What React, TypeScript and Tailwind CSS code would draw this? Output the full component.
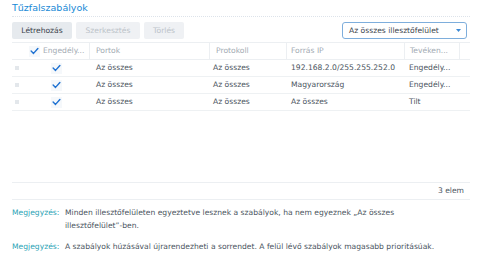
import React from 'react';

type Row = {
  ports: string;
  protocol: string;
  source: string;
  action: string;
};

const rows: Row[] = [
  { ports: 'Az összes', protocol: 'Az összes', source: '192.168.2.0/255.255.252.0', action: 'Engedély...' },
  { ports: 'Az összes', protocol: 'Az összes', source: 'Magyarország', action: 'Engedély...' },
  { ports: 'Az összes', protocol: 'Az összes', source: 'Az összes', action: 'Tilt' },
];

const cols = 'grid grid-cols-[13px_65px_120px_77px_118px_55px_10px]';

const Check = () => (
  <svg width="9" height="8" viewBox="0 0 10 9" fill="none">
    <path d="M1.2 4.6 L3.9 7.2 L8.8 1.6" stroke="#1f72d2" strokeWidth="1.6" strokeLinecap="round" strokeLinejoin="round" />
  </svg>
);

const App = () => {
  return (
    <div className="w-[480px] h-[260px] bg-white overflow-hidden font-['DejaVu_Sans',sans-serif] text-[7.6px] text-[#4a545e]">
      <div className="pl-3 pr-[10px]">
        {/* title */}
        <div className="h-[17px] flex items-center border-b border-dotted border-[#dde3ea] text-[9.5px] text-[#1789d6]">
          Tűzfalszabályok
        </div>

        {/* toolbar */}
        <div className="mt-[5px] h-[17px] flex items-center">
          <button className="h-[17px] w-[60px] rounded-[2px] bg-[#e6eaee] text-[#3b434b]">Létrehozás</button>
          <button className="ml-1 h-[17px] w-[64px] rounded-[2px] bg-[#eff1f4] text-[#bcc3c9]">Szerkesztés</button>
          <button className="ml-1 h-[17px] w-[40px] rounded-[2px] bg-[#eff1f4] text-[#bcc3c9]">Törlés</button>
          <div className="ml-auto mr-[3px] h-[17px] w-[125px] rounded-[3px] border border-[#7eaedc] flex items-center pl-[6px] pr-[5px] text-[#3b434b]">
            <span>Az összes illesztőfelület</span>
            <svg className="ml-auto" width="5" height="3" viewBox="0 0 5 3">
              <path d="M0 0 H5 L2.5 3 Z" fill="#3d8ad6" />
            </svg>
          </div>
        </div>

        {/* table */}
        <div className="mt-[3px] border-t border-[#eceff2]">
          <div className={`${cols} h-[17px] border-b border-[#eceff2] text-[#a3abb3]`}>
            <div />
            <div className="flex items-center pl-[4px] border-r border-[#eceff2]">
              <span className="w-[11px] h-[11px] flex items-center justify-center bg-[#f5f8fb]">
                <Check />
              </span>
              <span className="ml-[3px]">Engedély...</span>
            </div>
            <div className="flex items-center pl-[6px] border-r border-[#eceff2]">Portok</div>
            <div className="flex items-center pl-[6px] border-r border-[#eceff2]">Protokoll</div>
            <div className="flex items-center pl-[4px] border-r border-[#eceff2]">Forrás IP</div>
            <div className="flex items-center pl-[5px] border-r border-[#eceff2]">Tevéken...</div>
            <div />
          </div>
          {rows.map((r, i) => (
            <div key={i} className={`${cols} h-[17px] border-b border-[#eef1f3]`}>
              <div className="flex items-center pl-[3px]">
                <span className="w-[4px] h-[4px] bg-[#e3e7eb]" />
              </div>
              <div className="flex items-center justify-center pr-[2px]">
                <span className="w-[11px] h-[11px] flex items-center justify-center bg-[#f5f8fb]">
                  <Check />
                </span>
              </div>
              <div className="flex items-center pl-[6px]">{r.ports}</div>
              <div className="flex items-center pl-[3px]">{r.protocol}</div>
              <div className="flex items-center pl-[4px]">{r.source}</div>
              <div className="flex items-center pl-[4px]">{r.action}</div>
              <div />
            </div>
          ))}
        </div>

        {/* footer */}
        <div className="mt-[71px] h-[18px] border-t border-b border-[#eceff2] flex items-center justify-end pr-[6px]">
          3 elem
        </div>

        {/* notes */}
        <div className="mt-[6px] flex leading-[13px]">
          <span className="w-[53px] shrink-0 text-[#2aa3b5]">Megjegyzés:</span>
          <span>
            Minden illesztőfelületen egyeztetve lesznek a szabályok, ha nem egyeznek „Az összes
            <br />
            illesztőfelület”-ben.
          </span>
        </div>
        <div className="mt-[8px] flex leading-[13px]">
          <span className="w-[53px] shrink-0 text-[#2aa3b5]">Megjegyzés:</span>
          <span>A szabályok húzásával újrarendezheti a sorrendet. A felül lévő szabályok magasabb prioritásúak.</span>
        </div>
      </div>
    </div>
  );
};

export default App;
